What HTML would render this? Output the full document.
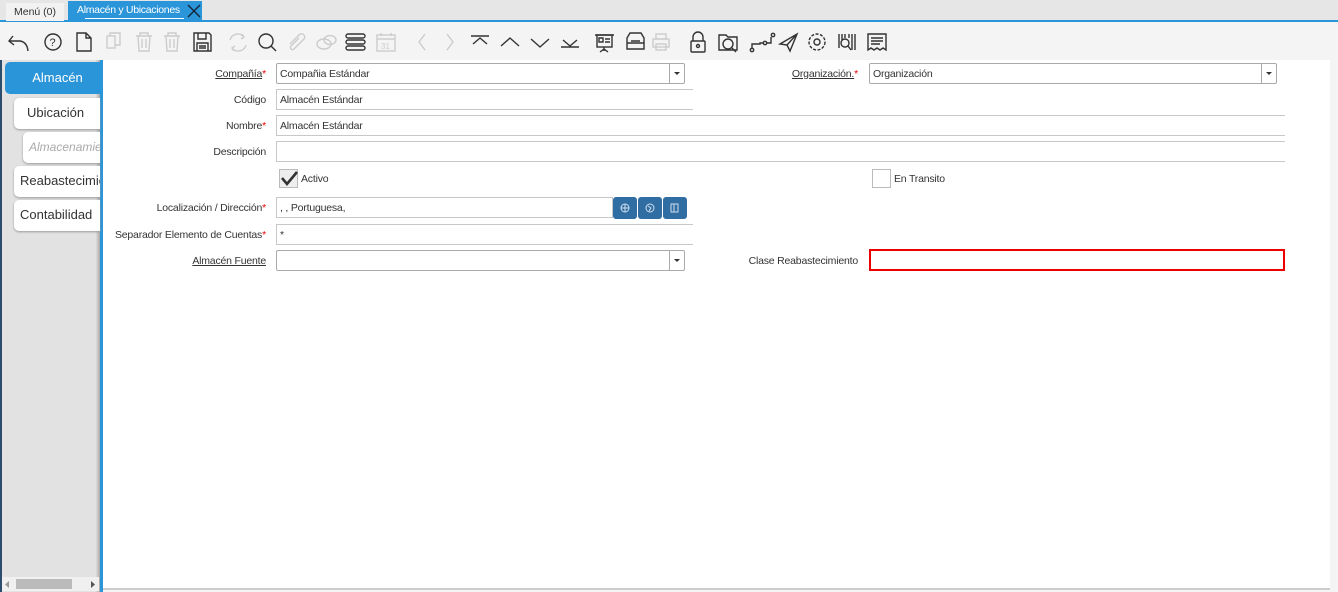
<!DOCTYPE html>
<html><head><meta charset="utf-8"><style>
*{margin:0;padding:0;box-sizing:border-box}
body{width:1338px;height:592px;overflow:hidden;background:#f4f4f4;font-family:"Liberation Sans",sans-serif;font-size:11px;color:#333;position:relative}
.a{position:absolute}
.tabbar{left:0;top:0;width:1338px;height:22px;background:#e6e6e6;border-bottom:2px solid #2b95d9}
.lbl{position:absolute;text-align:right;font-size:10.5px;color:#333;white-space:nowrap;letter-spacing:-0.2px}
.lbl u{text-decoration:underline}
.req{color:#e00}
.inp{position:absolute;height:21px;border:1px solid #c8c8c8;border-right:none;background:#fff;font-size:10.5px;padding:4px 3px 0;white-space:nowrap;letter-spacing:-0.2px}
.cb{position:absolute;height:21px;border:1px solid #aaa;background:#fff;font-size:10.5px;padding:4px 3px 0;border-radius:2px;letter-spacing:-0.2px}
.cb .dd{position:absolute;right:0;top:0;width:15px;height:19px;border-left:1px solid #aaa}
.cb .dd:after{content:"";position:absolute;left:4px;top:8px;border:3px solid transparent;border-top:3px solid #333}
.side{position:absolute;background:#fff;border-radius:5px 0 0 5px;font-size:13px;padding-left:13px;line-height:30px;box-shadow:0 1px 2px #999;white-space:nowrap;overflow:hidden}
svg{position:absolute}
</style></head><body>
<div class="a tabbar"></div>
<div class="a" style="left:6px;top:3px;width:58px;height:18px;background:#f2f2f2;font-size:10.5px;line-height:18px;text-align:center;color:#333">Menú (0)</div>
<div class="a" style="left:68px;top:1px;width:134px;height:21px;background:#2b95d9;color:#fff;font-size:10.5px;line-height:19px;padding-left:9px;letter-spacing:-0.3px">Almacén y Ubicaciones</div>
<div class="a" style="left:85px;top:18px;width:99px;height:1px;background:#fff"></div>
<svg style="left:187px;top:4px" width="14" height="14"><path d="M1 1L13 13M13 1L1 13" stroke="#123" stroke-width="1.3"/></svg>
<svg style="left:0;top:26px" width="900" height="34" fill="none" stroke="#333" stroke-width="1.4">
<path d="M13 10L9 15L14 19M9 15H20Q27 16 28 25"/>
<circle cx="53" cy="16" r="8"/><text x="49.5" y="20" font-size="11" fill="#333" stroke="none" font-family="Liberation Sans">?</text>
<path d="M77 7H86L91 12V25H77Z M86 7V12H91"/>
<g stroke="#ccc"><rect x="107" y="10" width="8" height="12"/><path d="M110 10V7H120V19H115"/>
<path d="M136 10H152M140 10V7H148V10M138 10L139 25H149L150 10M142 13V22M146 13V22"/>
<path d="M164 10H180M168 10V7H176V10M166 10L167 25H177L178 10M170 13V22M174 13V22"/></g>
<path d="M194 7H209L211 9V25H194Z M198 7V13H206V7 M197 17H208V25H197Z M199 20H206M199 22H206"/>
<g stroke="#ccc"><path d="M230 14A8 8 0 0 1 244 11M246 19A8 8 0 0 1 232 22M242 8L244 11L241 13M234 25L232 22L235 20"/>
<path d="M290 18L299 9A3 3 0 0 1 304 13L294 23A2 2 0 0 1 291 20L299 12"/>
<ellipse cx="324" cy="18" rx="7" ry="5"/><ellipse cx="330" cy="14" rx="6" ry="4.5"/>
<rect x="377" y="9" width="18" height="16"/><path d="M377 13H395M381 7V10M391 7V10"/></g>
<text x="381" y="23" font-size="8" fill="#ccc" stroke="none" font-family="Liberation Sans">31</text>
<circle cx="266" cy="15" r="7"/><path d="M271 20L276 25"/>
<rect x="346" y="8" width="19" height="4" rx="2"/><rect x="346" y="14" width="19" height="4" rx="2"/><rect x="346" y="20" width="19" height="4" rx="2"/>
<g stroke="#ccc"><path d="M425 8L419 16L425 24M447 8L453 16L447 24"/></g>
<path d="M471 10H489M473 18L480 12L487 18M501 20L510 12L519 20M531 13L540 21L549 13M561 21H579M563 14L570 20L577 14"/>
<rect x="597" y="9" width="15" height="12"/><path d="M595 9H614M604 21V25M600 26L604 23L608 26M599 12H603V16H599ZM605 13H610M605 16H610"/>
<path d="M627 12L630 7H641L644 12V23H627ZM627 12V17H644V12M631 15H640"/>
<g stroke="#ccc"><rect x="656" y="8" width="10" height="5"/><rect x="653" y="13" width="16" height="8"/><rect x="656" y="18" width="10" height="6"/></g>
<rect x="691" y="15" width="14" height="11" rx="1"/><path d="M693 15V11A5 5 0 0 1 703 11V15"/><circle cx="698" cy="20" r="1.5"/>
<path d="M719 9H726L728 11H737V24H719Z"/><circle cx="728" cy="18" r="5"/><path d="M732 22L736 26"/>
<circle cx="752" cy="24" r="1.7"/><circle cx="765" cy="17" r="1.7"/><circle cx="773" cy="9" r="1.7"/><path d="M752 22V18H760V17H763M767 17H771V11"/>
<path d="M780 18L797 8L790 25L787 19ZM787 19L797 8"/>
<circle cx="817" cy="16" r="3"/><circle cx="817" cy="16" r="8" stroke-dasharray="3 1.5"/>
<path d="M839 8V22M842 8V14M845 8V12M852 8V24M855 8V24M849 8V12"/><circle cx="845" cy="17" r="4"/><path d="M848 20L851 24"/>
<path d="M868 8H886V24L883 22L880 24L877 22L874 24L871 22L868 24Z M871 12H883M871 15H883M871 18H880"/>
</svg>
<div class="a" style="left:0;top:60px;width:102px;height:532px;background:#e2e2e2"></div>
<div class="a" style="left:0;top:60px;width:2px;height:532px;background:#2d4d6d"></div>
<div class="a" style="left:96px;top:60px;width:4px;height:532px;background:linear-gradient(90deg,#ddd,#aaa)"></div>
<div class="a" style="left:100px;top:60px;width:3px;height:532px;background:#2b95d9"></div>
<div class="a" style="left:5px;top:62px;width:95px;height:32px;background:#2b95d9;border-radius:5px 0 0 5px;color:#fff;font-size:13px;line-height:32px;text-align:center;padding-left:10px">Almacén</div>
<div class="side" style="left:14px;top:98px;width:86px;height:31px">Ubicación</div>
<div class="side" style="left:23px;top:132px;width:77px;height:31px;padding-left:6px;color:#aaa;font-style:italic;font-size:12px">Almacenamiento</div>
<div class="side" style="left:14px;top:166px;width:86px;height:31px;padding-left:6px">Reabastecimiento</div>
<div class="side" style="left:14px;top:200px;width:86px;height:31px;padding-left:6px">Contabilidad</div>
<div class="a" style="left:2px;top:577px;width:97px;height:14px;background:#f0f0f0"></div>
<div class="a" style="left:16px;top:579px;width:56px;height:10px;background:#bbb"></div>
<svg style="left:5px;top:580px" width="92" height="9"><path d="M4 1L0 4.5L4 8Z" fill="#999"/><path d="M86 1L90 4.5L86 8Z" fill="#555"/></svg>
<div class="a" style="left:103px;top:60px;width:1227px;height:530px;background:#fff;border-bottom:2px solid #ccc"></div>

<div class="lbl" style="right:1072px;top:68px"><u>Compañía</u><span class="req">*</span></div>
<div class="cb" style="left:276px;top:63px;width:409px">Compañia Estándar<div class="dd"></div></div>
<div class="lbl" style="right:480px;top:68px"><u>Organización.</u><span class="req">*</span></div>
<div class="cb" style="left:869px;top:63px;width:408px">Organización<div class="dd"></div></div>

<div class="lbl" style="right:1072px;top:94px">Código</div>
<div class="inp" style="left:276px;top:89px;width:417px">Almacén Estándar</div>
<div class="lbl" style="right:1072px;top:120px">Nombre<span class="req">*</span></div>
<div class="inp" style="left:276px;top:115px;width:1009px">Almacén Estándar</div>
<div class="lbl" style="right:1072px;top:146px">Descripción</div>
<div class="inp" style="left:276px;top:141px;width:1009px"></div>

<div class="a" style="left:279px;top:169px;width:19px;height:19px;border:1px solid #bbb;background:#eee"></div>
<svg style="left:280px;top:169px" width="20" height="18"><path d="M2 9L7 15L17 3" stroke="#333" stroke-width="2.6" fill="none"/></svg>
<div class="lbl" style="left:301px;top:173px">Activo</div>
<div class="a" style="left:872px;top:169px;width:19px;height:19px;border:1px solid #bbb;background:#fff"></div>
<div class="lbl" style="left:894px;top:173px">En Transito</div>

<div class="lbl" style="right:1072px;top:202px">Localización / Dirección<span class="req">*</span></div>
<div class="inp" style="left:276px;top:197px;width:337px;border-right:1px solid #c8c8c8">, , Portuguesa,</div>
<div class="a" style="left:613px;top:197px;width:24px;height:22px;background:#2f6da3;border-radius:3px"></div>
<div class="a" style="left:638px;top:197px;width:24px;height:22px;background:#2f6da3;border-radius:3px"></div>
<div class="a" style="left:663px;top:197px;width:24px;height:22px;background:#2f6da3;border-radius:3px"></div>
<svg style="left:613px;top:197px" width="74" height="22" fill="none" stroke="#cfe0ef" stroke-width="1"><circle cx="12" cy="11" r="4"/><path d="M8 11H16M12 7V15"/><circle cx="37" cy="11" r="4"/><path d="M35 9L38 11L36 14"/><rect x="58" y="7" width="7" height="8"/><path d="M61 7V15"/></svg>
<div class="lbl" style="right:1072px;top:229px">Separador Elemento de Cuentas<span class="req">*</span></div>
<div class="inp" style="left:276px;top:224px;width:417px">*</div>
<div class="lbl" style="right:1072px;top:255px"><u>Almacén Fuente</u></div>
<div class="cb" style="left:276px;top:250px;width:409px"><div class="dd"></div></div>
<div class="lbl" style="right:480px;top:255px">Clase Reabastecimiento</div>
<div class="a" style="left:869px;top:249px;width:416px;height:22px;border:2px solid #e00"></div>
</body></html>
